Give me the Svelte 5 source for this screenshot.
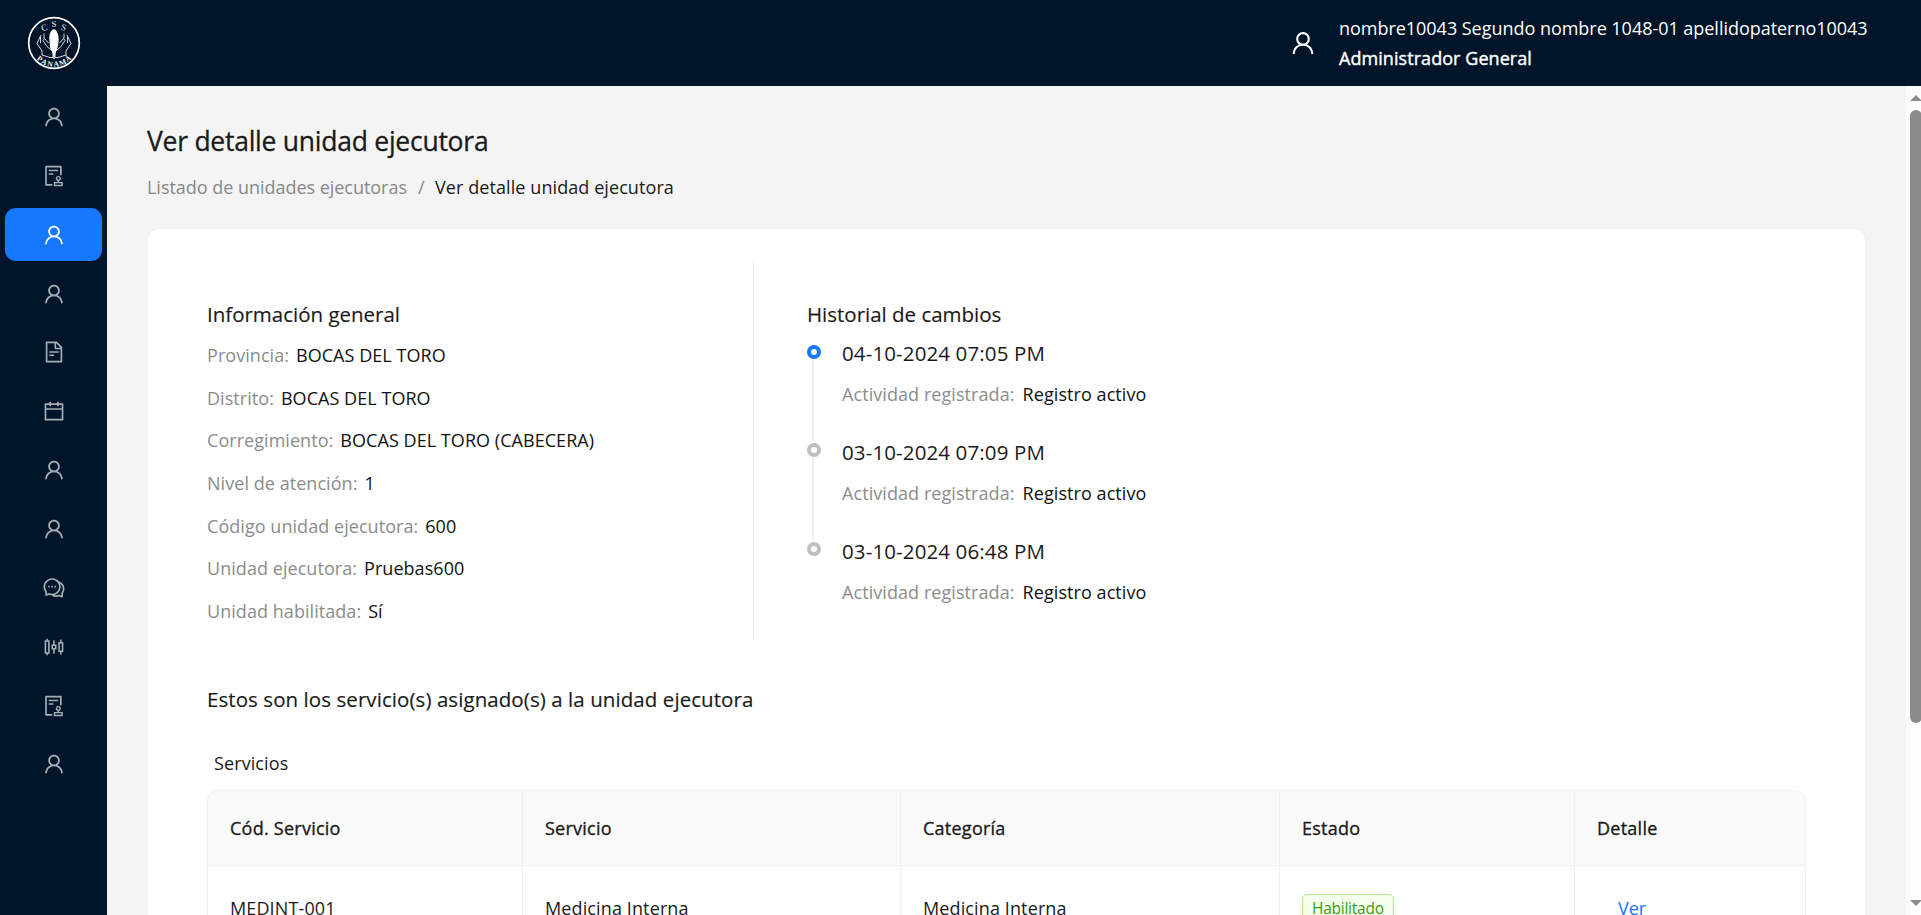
<script>
  const user = ['M858.5 763.6a374 374 0 00-80.6-119.5 375.63 375.63 0 00-119.5-80.6c-.4-.2-.8-.3-1.2-.5C719.5 518 760 444.7 760 362c0-137-111-248-248-248S264 225 264 362c0 82.7 40.5 156 102.8 201.1-.4.2-.8.3-1.2.5-44.8 18.9-85 46-119.5 80.6a375.63 375.63 0 00-80.6 119.5A371.7 371.7 0 00136 901.8a8 8 0 008 8.2h60c4.4 0 7.9-3.5 8-7.8 2-77.2 33-149.5 87.8-204.3 56.7-56.7 132-87.9 212.2-87.9s155.5 31.2 212.2 87.9C779 752.7 810 825 812 902.2c.1 4.4 3.6 7.8 8 7.8h60a8 8 0 008-8.2c-1-47.8-10.9-94.3-29.5-138.2zM512 534c-45.9 0-89.1-17.9-121.6-50.4S340 407.9 340 362c0-45.9 17.9-89.1 50.4-121.6S466.1 190 512 190s89.1 17.9 121.6 50.4S684 316.1 684 362c0 45.9-17.9 89.1-50.4 121.6S557.9 534 512 534z'];
  const audit = ['M296 250c-4.4 0-8 3.6-8 8v48c0 4.4 3.6 8 8 8h384c4.4 0 8-3.6 8-8v-48c0-4.4-3.6-8-8-8H296zm184 144H296c-4.4 0-8 3.6-8 8v48c0 4.4 3.6 8 8 8h184c4.4 0 8-3.6 8-8v-48c0-4.4-3.6-8-8-8zm-48 458H208V148h560v320c0 4.4 3.6 8 8 8h56c4.4 0 8-3.6 8-8V108c0-17.7-14.3-32-32-32H168c-17.7 0-32 14.3-32 32v784c0 17.7 14.3 32 32 32h264c4.4 0 8-3.6 8-8v-56c0-4.4-3.6-8-8-8zm440-88H728v-36.6c46.3-13.8 80-56.6 80-107.4 0-61.9-50.1-112-112-112s-112 50.1-112 112c0 50.7 33.7 93.6 80 107.4V764H520c-8.8 0-16 7.2-16 16v152c0 8.8 7.2 16 16 16h352c8.8 0 16-7.2 16-16V780c0-8.8-7.2-16-16-16zM646 620c0-27.6 22.4-50 50-50s50 22.4 50 50-22.4 50-50 50-50-22.4-50-50zm180 266H566v-60h260v60z'];
  const file = ['M854.6 288.6L639.4 73.4c-6-6-14.1-9.4-22.6-9.4H192c-17.7 0-32 14.3-32 32v832c0 17.7 14.3 32 32 32h640c17.7 0 32-14.3 32-32V311.3c0-8.5-3.4-16.7-9.4-22.7zM790.2 326H602V137.8L790.2 326zm1.8 562H232V136h302v216a42 42 0 0042 42h216v494zM504 618H320c-4.4 0-8 3.6-8 8v48c0 4.4 3.6 8 8 8h184c4.4 0 8-3.6 8-8v-48c0-4.4-3.6-8-8-8zM312 490v48c0 4.4 3.6 8 8 8h384c4.4 0 8-3.6 8-8v-48c0-4.4-3.6-8-8-8H320c-4.4 0-8 3.6-8 8z'];
  const calendar = ['M880 184H712v-64c0-4.4-3.6-8-8-8h-56c-4.4 0-8 3.6-8 8v64H384v-64c0-4.4-3.6-8-8-8h-56c-4.4 0-8 3.6-8 8v64H144c-17.7 0-32 14.3-32 32v664c0 17.7 14.3 32 32 32h736c17.7 0 32-14.3 32-32V216c0-17.7-14.3-32-32-32zm-40 656H184V460h656v380zM184 392V256h128v48c0 4.4 3.6 8 8 8h56c4.4 0 8-3.6 8-8v-48h256v48c0 4.4 3.6 8 8 8h56c4.4 0 8-3.6 8-8v-48h128v136H184z'];
  const comment = [
    'M573 421c-23.1 0-41 17.9-41 40s17.9 40 41 40c21.1 0 39-17.9 39-40s-17.9-40-39-40zm-280 0c-23.1 0-41 17.9-41 40s17.9 40 41 40c21.1 0 39-17.9 39-40s-17.9-40-39-40z',
    'M894 345a343.92 343.92 0 00-189-130v.1c-17.1-19-36.4-36.5-58-52.1-163.7-119-393.5-82.7-513 81-96.3 133-92.2 311.9 6 439l.8 132.6c0 3.2.5 6.4 1.5 9.4a31.95 31.95 0 0040.1 20.9L309 806c33.5 11.9 68.1 18.7 102.5 20.6l-.5.4c89.1 64.9 205.9 84.4 313 49l127.1 41.4c3.2 1 6.5 1.6 9.9 1.6 17.7 0 32-14.3 32-32V753c88.1-119.6 90.4-284.9 1-408zM323 735l-12-5-99 31-1-104-8-9c-84.6-103.2-90.2-251.9-11-361 96.4-132.2 281.2-161.4 413-66 132.2 96.1 161.5 280.6 66 412-80.1 109.9-223.5 150.5-348 102zm505-17l-8 10 1 104-98-33-12 5c-56 20.8-115.7 22.5-171 7l-.2-.1A367.31 367.31 0 00729 676c76.4-105.3 88.8-237.6 44.4-350.4l.6.4c23 16.5 44.1 37.1 62 62 72.6 99.6 68.5 235.2-8 330z',
    'M433 421c-23.1 0-41 17.9-41 40s17.9 40 41 40c21.1 0 39-17.9 39-40s-17.9-40-39-40z'
  ];
  const sliders = ['M320 224h-66v-56c0-4.4-3.6-8-8-8h-52c-4.4 0-8 3.6-8 8v56h-66c-4.4 0-8 3.6-8 8v560c0 4.4 3.6 8 8 8h66v56c0 4.4 3.6 8 8 8h52c4.4 0 8-3.6 8-8v-56h66c4.4 0 8-3.6 8-8V232c0-4.4-3.6-8-8-8zm-60 508h-80V292h80v440zm644-436h-66v-96c0-4.4-3.6-8-8-8h-52c-4.4 0-8 3.6-8 8v96h-66c-4.4 0-8 3.6-8 8v416c0 4.4 3.6 8 8 8h66v96c0 4.4 3.6 8 8 8h52c4.4 0 8-3.6 8-8v-96h66c4.4 0 8-3.6 8-8V304c0-4.4-3.6-8-8-8zm-60 364h-80V364h80v296zM612 404h-66V232c0-4.4-3.6-8-8-8h-52c-4.4 0-8 3.6-8 8v172h-66c-4.4 0-8 3.6-8 8v200c0 4.4 3.6 8 8 8h66v172c0 4.4 3.6 8 8 8h52c4.4 0 8-3.6 8-8V620h66c4.4 0 8-3.6 8-8V412c0-4.4-3.6-8-8-8zm-60 145a3 3 0 01-3 3h-74a3 3 0 01-3-3v-74a3 3 0 013-3h74a3 3 0 013 3v74z'];

  const menu = [user, audit, user, user, file, calendar, user, user, comment, sliders, audit, user];
  const active = 2;

  const info = [
    ['Provincia:', 'BOCAS DEL TORO'],
    ['Distrito:', 'BOCAS DEL TORO'],
    ['Corregimiento:', 'BOCAS DEL TORO (CABECERA)'],
    ['Nivel de atención:', '1'],
    ['Código unidad ejecutora:', '600'],
    ['Unidad ejecutora:', 'Pruebas600'],
    ['Unidad habilitada:', 'Sí']
  ];
  const history = ['04-10-2024 07:05 PM', '03-10-2024 07:09 PM', '03-10-2024 06:48 PM'];
</script>

{#snippet icon(paths)}
  <svg viewBox="0 0 1024 1024" fill="currentColor" aria-hidden="true">
    {#each paths as d}<path {d} />{/each}
  </svg>
{/snippet}

<div class="app">
  <header>
    <div class="logo">
      <svg viewBox="0 0 54 54" fill="none" stroke="#fff">
        <circle cx="27" cy="27" r="25.3" stroke-width="1.7" />
        <g stroke="none" fill="#dfe3e6" font-family="Liberation Serif, serif" font-size="9" text-anchor="middle">
          <text x="17" y="14.5" transform="rotate(-18 17 11)">C</text>
          <text x="27" y="11.3">S</text>
          <text x="37" y="14.5" transform="rotate(18 37 11)">S</text>
          <g font-weight="700" font-size="7.5" fill="#fff">
            <text x="12.5" y="45" transform="rotate(38 12.5 43)">P</text>
            <text x="17" y="48.5" transform="rotate(26 17 46.5)">A</text>
            <text x="23" y="50.4" transform="rotate(9 23 48)">N</text>
            <text x="29.3" y="50.4" transform="rotate(-6 29.3 48)">A</text>
            <text x="35.8" y="48.8" transform="rotate(-22 35.8 46.5)">M</text>
            <text x="41.3" y="45" transform="rotate(-38 41.3 43)">Á</text>
          </g>
        </g>
        <path d="M26 13.5c-3 2-4 6-3.6 10l.6 8 2 4 1.6 5h1l1.4-5 1.6-4c1.6-6 1.400-12-.6-15.500-1-2-2-3-4-2.500z" fill="#fff" stroke="none" />
        <path d="M27 40v3" stroke-width="1.2" />
        <path d="M14 19l-4 8.500 5 7.500v4l8 2.500h3v-6l-6-5-4-6 1.500-2 4 4.500M13.500 21v6M17 17.500v5M40 19l4 8.500-5 7.500v4l-8 2.500h-3v-6l6-5 4-6-1.500-2-4 4.500M40.500 21v6M37 17.500v5" stroke-width="1" stroke-opacity=".85" />
      </svg>
    </div>
    <div class="account">
      <span class="avatar">{@render icon(user)}</span>
      <div class="who">
        <span class="name">nombre10043 Segundo nombre 1048-01 apellidopaterno10043</span>
        <strong>Administrador General</strong>
      </div>
    </div>
  </header>

  <div class="body">
    <nav>
      {#each menu as paths, i}
        <a class:active={i === active} href="#{i}" aria-label="menu">{@render icon(paths)}</a>
      {/each}
    </nav>

    <main>
      <h1>Ver detalle unidad ejecutora</h1>
      <div class="crumbs">
        <span class="from">Listado de unidades ejecutoras</span><span class="sep">/</span><span class="here">Ver detalle unidad ejecutora</span>
      </div>

      <section class="card">
        <div class="top">
          <div class="info">
            <h2>Información general</h2>
            {#each info as [label, value]}
              <p class="field"><span class="label">{label}</span><span class="value">{value}</span></p>
            {/each}
          </div>
          <div class="history">
            <h2>Historial de cambios</h2>
            <ul>
              {#each history as date, i}
                <li class:current={i === 0}>
                  <i class="dot"></i>
                  <div class="date">{date}</div>
                  <p class="act"><span class="label">Actividad registrada:</span><span class="value">Registro activo</span></p>
                </li>
              {/each}
            </ul>
          </div>
        </div>

        <h2 class="assigned">Estos son los servicio(s) asignado(s) a la unidad ejecutora</h2>
        <div class="caption">Servicios</div>
        <div class="table">
          <div class="row head">
            <span>Cód. Servicio</span><span>Servicio</span><span>Categoría</span><span>Estado</span><span>Detalle</span>
          </div>
          <div class="row">
            <span>MEDINT-001</span><span>Medicina Interna</span><span>Medicina Interna</span>
            <span><em class="tag">Habilitado</em></span>
            <span><b class="link">Ver</b></span>
          </div>
        </div>
      </section>
    </main>

    <div class="scroll">
      <i class="up"></i>
      <i class="thumb"></i>
      <i class="down"></i>
    </div>
  </div>
</div>

<style>
  :global(body) { overflow: hidden; }
  .app {
    width: 1921px; height: 915px; overflow: hidden;
    display: flex; flex-direction: column;
    font: 400 18px/29px "Open Sans", "Noto Sans", sans-serif;
    color: #1a1a1a; background: #f4f4f4;
  }
  .app * { box-sizing: border-box; }
  h1, h2, p, ul { margin: 0; padding: 0; font-weight: 400; }
  i, em { font-style: normal; }
  svg { display: block; }
  span, strong, h1, h2, .date { white-space: nowrap; }

  header {
    flex: none; height: 86px; background: #001529; color: #fff;
    display: flex; justify-content: space-between;
  }
  .logo { padding: 16px 0 0 26.5px; }
  .logo svg { width: 54px; height: 54px; }
  .account { display: flex; align-items: center; width: 632px; }
  .avatar { width: 50px; }
  .avatar svg { width: 28px; height: 28px; }
  .who { display: flex; flex-direction: column; margin-top: 1px; }
  .name { letter-spacing: -0.03px; }
  strong { font-weight: 500; letter-spacing: 0.06px; line-height: 30px; -webkit-text-stroke: 0.4px; }

  .body { flex: 1; min-height: 0; display: flex; }
  nav {
    flex: none; width: 107px; background: #001529; padding: 4.5px 5px 0;
    display: flex; flex-direction: column; gap: 5.86px;
  }
  nav a {
    flex: none; height: 53px; border-radius: 11px; color: rgba(255, 255, 255, 0.65);
    display: flex; align-items: center; justify-content: center;
  }
  nav a.active { background: #1677ff; color: #fff; }
  nav svg { width: 24px; height: 24px; }

  main { flex: 1; min-width: 0; padding: 39px 40px 0; }
  h1 { font-size: 26.5px; line-height: 32px; font-weight: 500; letter-spacing: -0.25px; -webkit-text-stroke: 0.3px; }
  .crumbs { margin-top: 16px; display: flex; letter-spacing: -0.03px; }
  .from, .sep { color: #888; }
  .sep { margin: 0 10.5px 0 11px; }
  .here { letter-spacing: 0.08px; }

  .card {
    margin-top: 26px; height: 900px; background: #fff;
    border: 1px solid #f0f0f0; border-radius: 11px; padding: 30px 59px 0;
  }
  .top { display: flex; height: 381px; }
  .info { width: 547px; padding-top: 41px; border-right: 1px solid #f0f0f0; }
  .history { padding: 41px 0 0 53px; }
  h2 { font-size: 20.5px; line-height: 28px; letter-spacing: -0.01px; -webkit-text-stroke: 0.15px; }
  .field { display: flex; height: 42.67px; gap: 7px; letter-spacing: 0.05px; }
  h2 + .field { margin-top: 13px; }
  .label { color: #8c8c8c; }
  .value { color: #111; }

  ul { list-style: none; padding-top: 11px; }
  li { position: relative; height: 98.9px; padding-left: 35px; }
  li:not(:last-child)::before {
    content: ""; position: absolute; left: 5px; top: 16px; width: 2px; height: 86px; background: #f0f0f0;
  }
  .dot {
    position: absolute; left: 0; top: 5.5px; width: 14px; height: 14px;
    border: 4px solid #bfbfbf; border-radius: 50%; background: #fff;
  }
  .current .dot { border-color: #1677ff; }
  .date { font-size: 20.5px; line-height: 28px; letter-spacing: 0.12px; }
  .act { display: flex; gap: 8px; margin-top: 13px; letter-spacing: 0.07px; }

  .assigned { margin-top: 45px; letter-spacing: 0.07px; }
  .caption { margin: 36px 0 0 7px; letter-spacing: 0.1px; }
  .table { border: 1px solid #f0f0f0; border-radius: 11px 11px 0 0; margin-top: 12px; overflow: hidden; }
  .row {
    display: grid; grid-template-columns: 315px 378px 379px 295px 1fr;
    height: 85px; align-items: stretch; letter-spacing: 0.12px;
  }
  .row > span { display: flex; align-items: center; padding-left: 22px; border-right: 1px solid #f0f0f0; }
  .row > span:last-child { border-right: 0; }
  .head {
    height: 75px; background: #fafafa; border-bottom: 1px solid #f0f0f0;
    font-weight: 500; letter-spacing: 0.25px; -webkit-text-stroke: 0.35px;
  }
  .tag {
    height: 29px; line-height: 27px; padding: 0 9px; font-size: 15.5px; letter-spacing: -0.25px;
    color: #389e0d; background: #f6ffed; border: 1px solid #b7eb8f; border-radius: 5px;
  }
  .link { margin-left: 21px; font-weight: 400; letter-spacing: -0.1px; color: #1677ff; }

  .scroll { position: relative; flex: none; width: 15px; background: #fcfcfc; overflow: hidden; }
  .scroll i { position: absolute; left: 4px; }
  .thumb { top: 24px; width: 12px; height: 613px; border-radius: 6px; background: #8b8b8b; }
  .up, .down { border: 6px solid transparent; }
  .up { top: 3px; border-bottom-color: #8b8b8b; }
  .down { bottom: 3px; border-top-color: #8b8b8b; }
</style>
